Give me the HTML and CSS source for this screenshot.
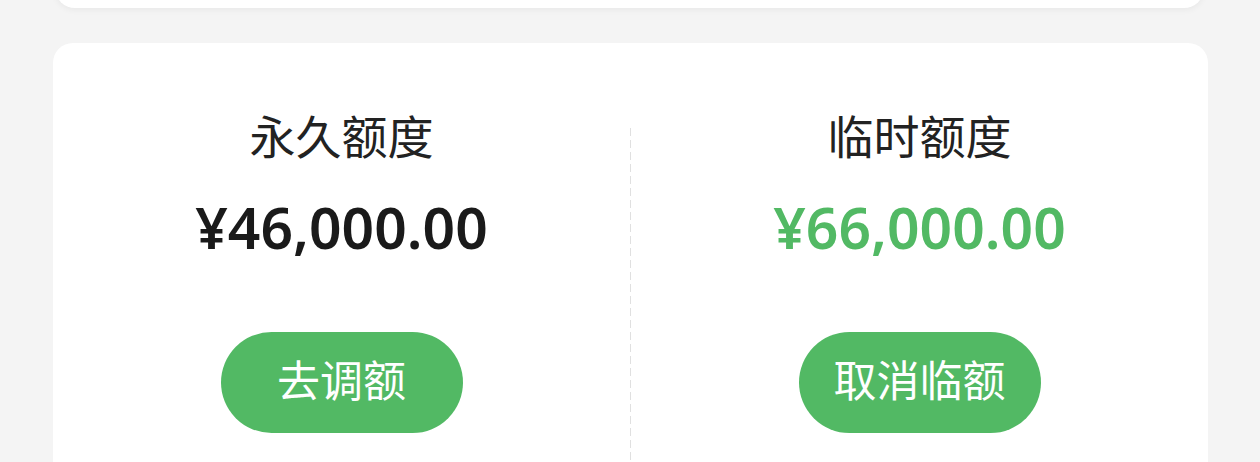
FILE: index.html
```html
<!DOCTYPE html>
<html lang="zh-CN">
<head>
    <meta charset="UTF-8">
    <meta name="viewport" content="width=device-width, initial-scale=1.0">
    <title>额度</title>

    <link rel="stylesheet" href="styles.css">
</head>
<body>
    <div class="page">
        <div class="card card-top"></div>

        <div class="card quota">
            <div class="quota-col">
                <div class="quota-title">永久额度</div>
                <div class="quota-amount">¥46,000.00</div>
                <button class="quota-btn" type="button">去调额</button>
            </div>

            <div class="quota-divider"></div>

            <div class="quota-col">
                <div class="quota-title">临时额度</div>
                <div class="quota-amount green">¥66,000.00</div>
                <button class="quota-btn" type="button">取消临额</button>
            </div>
        </div>
    </div>
</body>
</html>
```

FILE: styles.css
```css
body{
    margin: 0;
    background-color: #f4f4f4;
    font-family: "Noto Sans CJK SC", "Noto Sans", sans-serif;
    overflow: hidden;
}

.page{
    padding: 0 52px 0 53px;
}

.card{
    background-color: #fff;
    border-radius: 20px;
}

.card-top{
    height: 100px;
    margin: -92px 4px 35px 2px;
    box-shadow: 0 2px 6px rgba(0, 0, 0, .05);
}

.quota{
    display: grid;
    grid-template-columns: 1fr 1px 1fr;
    height: 460px;
}

.quota-col{
    display: flex;
    flex-direction: column;
    align-items: center;
    padding-top: 68px;
}

.quota-title{
    font-size: 46px;
    line-height: 46px;
    color: #222;
}

.quota-amount{
    margin-top: 42px;
    font-family: "Noto Sans", sans-serif;
    font-size: 57px;
    line-height: 57px;
    font-weight: 600;
    color: #1a1a1a;
}

.quota-amount.green{
    color: #52b964;
}

.quota-btn{
    margin-top: 76px;
    width: 242px;
    height: 101px;
    padding: 0 0 8px;
    border: 0;
    border-radius: 51px;
    background-color: #52b964;
    color: #fff;
    font-family: inherit;
    font-size: 43px;
    line-height: 1;
    cursor: pointer;
}

.quota-divider{
    margin-top: 85px;
    background: repeating-linear-gradient(to bottom, #e0e0e0 0 8px, transparent 8px 12px);
}
```
